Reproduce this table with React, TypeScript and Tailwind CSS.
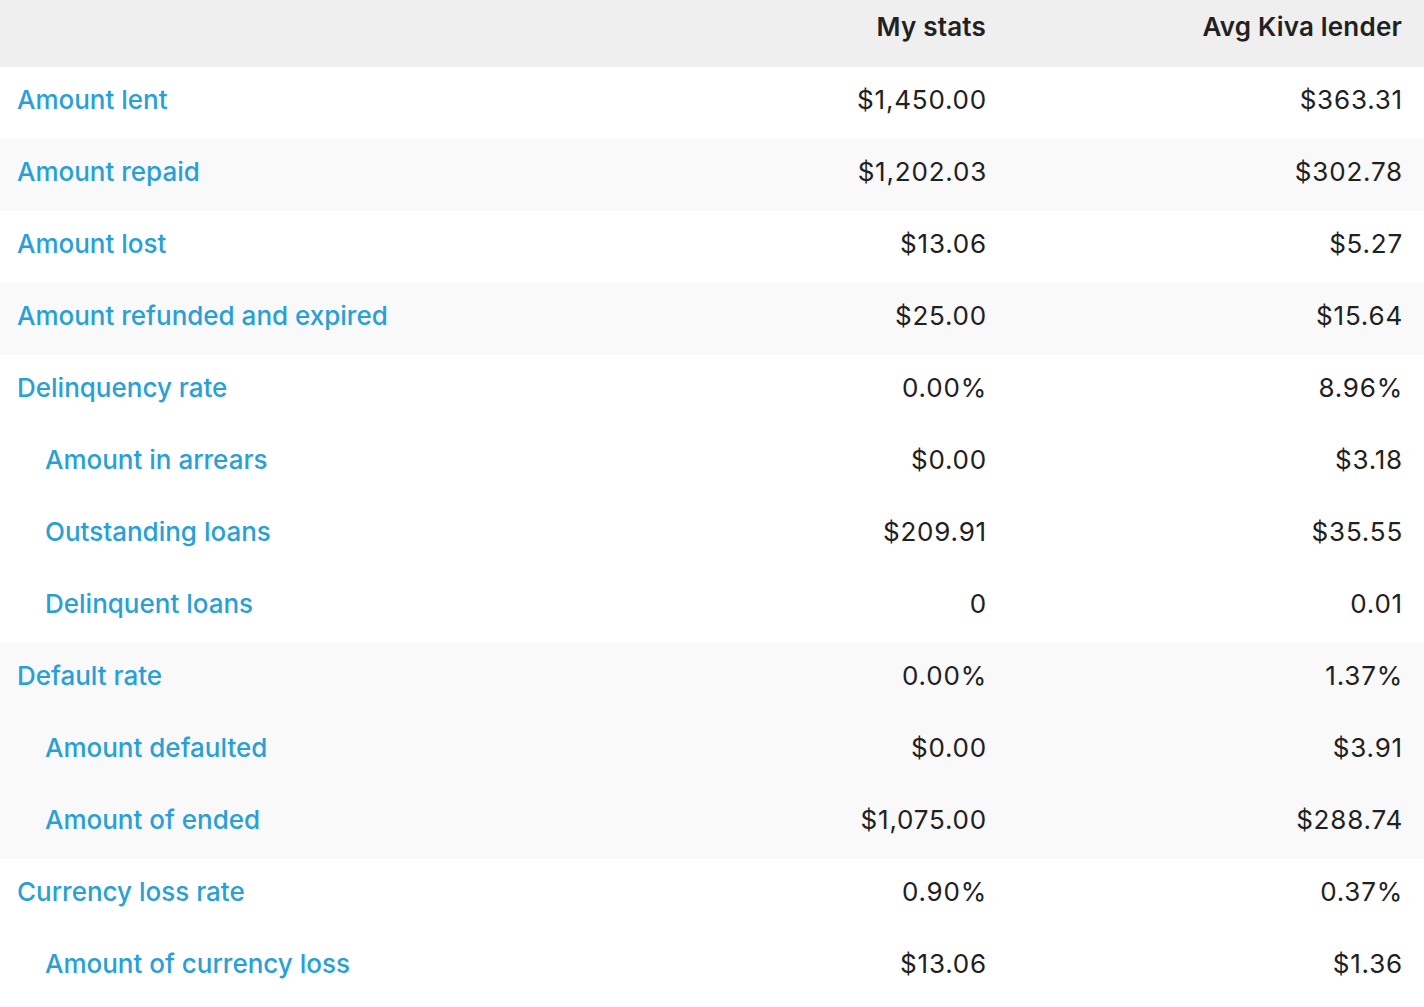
type Row = {
  label: string;
  mine: string;
  avg: string;
  sub?: boolean;
};

type Group = Row[];

const groups: Group[] = [
  [{ label: "Amount lent", mine: "$1,450.00", avg: "$363.31" }],
  [{ label: "Amount repaid", mine: "$1,202.03", avg: "$302.78" }],
  [{ label: "Amount lost", mine: "$13.06", avg: "$5.27" }],
  [{ label: "Amount refunded and expired", mine: "$25.00", avg: "$15.64" }],
  [
    { label: "Delinquency rate", mine: "0.00%", avg: "8.96%" },
    { label: "Amount in arrears", mine: "$0.00", avg: "$3.18", sub: true },
    { label: "Outstanding loans", mine: "$209.91", avg: "$35.55", sub: true },
    { label: "Delinquent loans", mine: "0", avg: "0.01", sub: true },
  ],
  [
    { label: "Default rate", mine: "0.00%", avg: "1.37%" },
    { label: "Amount defaulted", mine: "$0.00", avg: "$3.91", sub: true },
    { label: "Amount of ended", mine: "$1,075.00", avg: "$288.74", sub: true },
  ],
  [
    { label: "Currency loss rate", mine: "0.90%", avg: "0.37%" },
    { label: "Amount of currency loss", mine: "$13.06", avg: "$1.36", sub: true },
  ],
];

export default function App() {
  return (
    <div
      className="min-h-screen bg-white text-[#212121]"
      style={{ fontFamily: "Inter, 'Noto Sans', sans-serif" }}
    >
      {/* Header */}
      <div className="grid grid-cols-[592px_416px_416px] h-[67px] bg-[#efefef] items-center text-[26px] font-semibold tracking-[0.2px]">
        <div />
        <div className="text-right pr-[22px] pb-[14px]">My stats</div>
        <div className="text-right pr-[22px] pb-[14px]">Avg Kiva lender</div>
      </div>

      {/* Body */}
      {groups.map((group, gi) => (
        <div key={gi} className={gi % 2 === 1 ? "bg-[#f9f9f9]" : "bg-white"}>
          {group.map((row) => (
            <div
              key={row.label}
              className="grid grid-cols-[592px_416px_416px] h-[72px] items-center text-[26px] pb-[7px]"
            >
              <div
                className={`font-medium text-[#2a9fd6] ${
                  row.sub ? "pl-[45px]" : "pl-[17px]"
                }`}
              >
                {row.label}
              </div>
              <div className="text-right pr-[21px] tracking-[0.8px]">{row.mine}</div>
              <div className="text-right pr-[21px] tracking-[0.8px]">{row.avg}</div>
            </div>
          ))}
        </div>
      ))}
    </div>
  );
}
